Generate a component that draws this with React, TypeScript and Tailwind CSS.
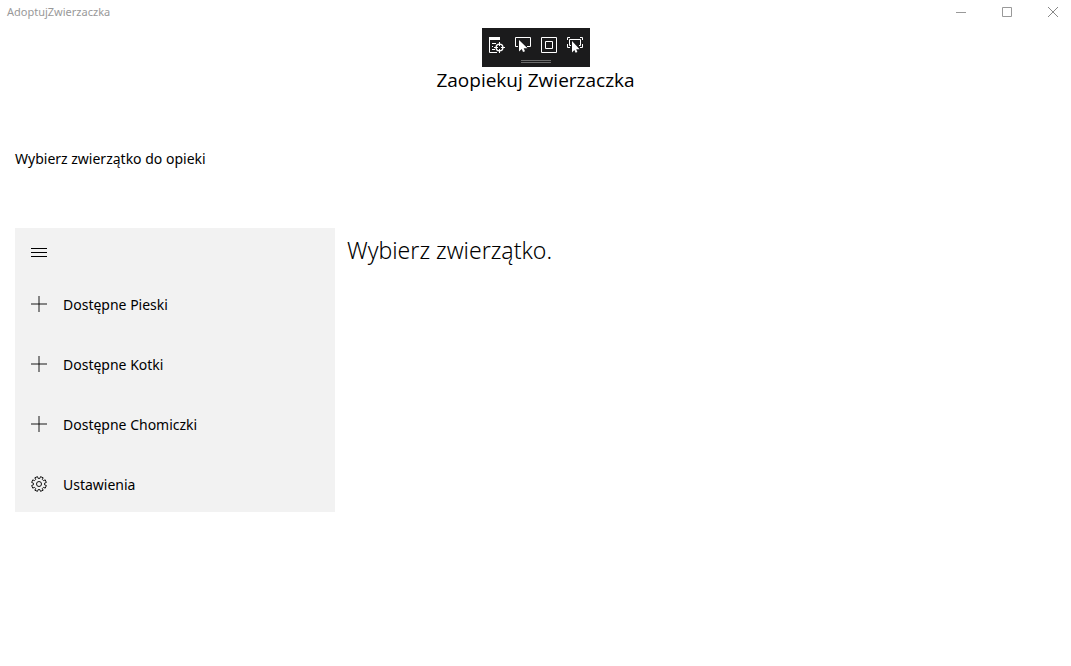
import type { ReactNode } from "react";

const GEAR_TEETH = 8;

function gearPath() {
  const points: string[] = [];
  const profile: [number, number][] = [
    [-0.25, 5.6],
    [-0.19, 7.5],
    [0.19, 7.5],
    [0.25, 5.6],
  ];
  for (let i = 0; i < GEAR_TEETH; i++) {
    for (const [offset, radius] of profile) {
      const angle = ((i + 0.5) * 2 * Math.PI) / GEAR_TEETH + offset;
      points.push(
        `${(8 + radius * Math.sin(angle)).toFixed(2)} ${(8 - radius * Math.cos(angle)).toFixed(2)}`,
      );
    }
  }
  return `M${points.join("L")}Z`;
}

function GearIcon() {
  return (
    <svg className="size-4 overflow-visible" viewBox="0 0 16 16" fill="none" stroke="#111" strokeLinejoin="round" aria-hidden="true">
      <path d={gearPath()} />
      <circle cx="8" cy="8" r="2.5" />
    </svg>
  );
}

function PlusIcon() {
  return (
    <svg className="size-4" viewBox="0 0 16 16" stroke="#000" strokeOpacity="0.9" aria-hidden="true">
      <path d="M0 8H16M8 0V16" />
    </svg>
  );
}

function ToolButton({ label, children }: { label: string; children: ReactNode }) {
  return (
    <button type="button" aria-label={label} className="size-[26px]">
      <svg className="size-[26px]" viewBox="0 0 26 26" fill="none" stroke="#fff" aria-hidden="true">
        {children}
      </svg>
    </button>
  );
}

function DebugToolbar() {
  return (
    <div className="absolute top-7 left-1/2 flex h-[39px] w-[108px] -translate-x-1/2 flex-col items-center bg-[#1b1b1c] pt-1">
      <div className="flex">
        <ToolButton label="Live Visual Tree">
          <path d="M5 5H16V8H5Z" fill="#fff" stroke="none" />
          <path d="M5.5 7V20.5H13M8 11.5H12M8 14.5H9M8 17.5H11" />
          <circle cx="15.5" cy="15.5" r="3.4" strokeWidth="1.4" />
          <path d="M15.5 10V14M15.5 17V21M10 15.5H14M17 15.5H21" />
        </ToolButton>
        <ToolButton label="Select element">
          <path d="M8 14.5H5.5V5.5H20.5V14.5H17" />
          <path d="M9 8V19.5L11.8 17L13 20L15 19.2L13.7 16.2H17.5Z" fill="#fff" stroke="none" />
        </ToolButton>
        <ToolButton label="Display layout adorners">
          <path d="M5.5 5.5H20.5V20.5H5.5ZM9.5 9.5H16.5V16.5H9.5Z" />
        </ToolButton>
        <ToolButton label="Track focused element">
          <path d="M8 5.5H5.5V8M18 5.5H20.5V8M5.5 12V15.5H8M20.5 12V15.5H18" />
          <path d="M9 13.5H7.5V7.5H18.5V13.5H17" />
          <path d="M10 9V20.5L12.4 18L13.6 20.8L15.4 20L14.2 17.2H17.6Z" fill="#fff" stroke="none" />
        </ToolButton>
      </div>
      <div className="mt-[2px] h-[3px] w-[30px] border-y border-[#6b6b6b]" />
    </div>
  );
}

const caption = "flex h-6 w-9 items-center justify-center";

function TitleBar() {
  return (
    <div className="flex h-6 items-center justify-between pl-[7px] text-[11px] leading-6 text-[#999]">
      <span>AdoptujZwierzaczka</span>
      <div className="flex gap-[10px]">
        <button type="button" aria-label="Minimalizuj" className={caption}>
          <svg className="size-[10px]" viewBox="0 0 10 10" stroke="#999" aria-hidden="true">
            <path d="M0 5.5H10" />
          </svg>
        </button>
        <button type="button" aria-label="Maksymalizuj" className={caption}>
          <svg className="size-[10px]" viewBox="0 0 10 10" fill="none" stroke="#999" aria-hidden="true">
            <path d="M.5 .5H9.5V9.5H.5Z" />
          </svg>
        </button>
        <button type="button" aria-label="Zamknij" className={caption}>
          <svg className="size-[10px]" viewBox="0 0 10 10" stroke="#888" aria-hidden="true">
            <path d="M0 0L10 10M10 0L0 10" />
          </svg>
        </button>
      </div>
    </div>
  );
}

const items = [
  { label: "Dostępne Pieski", icon: <PlusIcon /> },
  { label: "Dostępne Kotki", icon: <PlusIcon /> },
  { label: "Dostępne Chomiczki", icon: <PlusIcon /> },
  { label: "Ustawienia", icon: <GearIcon /> },
];

export default function App() {
  return (
    <div className="relative min-h-screen bg-white font-['Noto_Sans','Open_Sans',sans-serif] text-black">
      <TitleBar />
      <DebugToolbar />
      <h1 className="pt-11 text-center font-['Open_Sans','Noto_Sans',sans-serif] text-[19px] leading-6">Zaopiekuj Zwierzaczka</h1>
      <main className="px-[15px] pt-[56px]">
        <p className="text-[14px] leading-[22px]">Wybierz zwierzątko do opieki</p>
        <div className="mt-[58px] flex items-start gap-3">
          <nav className="w-80 shrink-0 bg-[#f2f2f2] text-[14px]">
            <button type="button" aria-label="Menu" className="flex size-12 items-center justify-center">
              <svg className="size-4" viewBox="0 0 16 16" stroke="#000" aria-hidden="true">
                <path d="M0 4.5H16M0 8.5H16M0 12.5H16" />
              </svg>
            </button>
            <ul className="flex flex-col gap-1">
              {items.map((item) => (
                <li key={item.label}>
                  <button type="button" className="flex h-14 w-full items-center gap-4 px-4 text-left">
                    {item.icon}
                    {item.label}
                  </button>
                </li>
              ))}
            </ul>
          </nav>
          <h2 className="pt-2 text-[23px] leading-7 font-light">Wybierz zwierzątko.</h2>
        </div>
      </main>
    </div>
  );
}
